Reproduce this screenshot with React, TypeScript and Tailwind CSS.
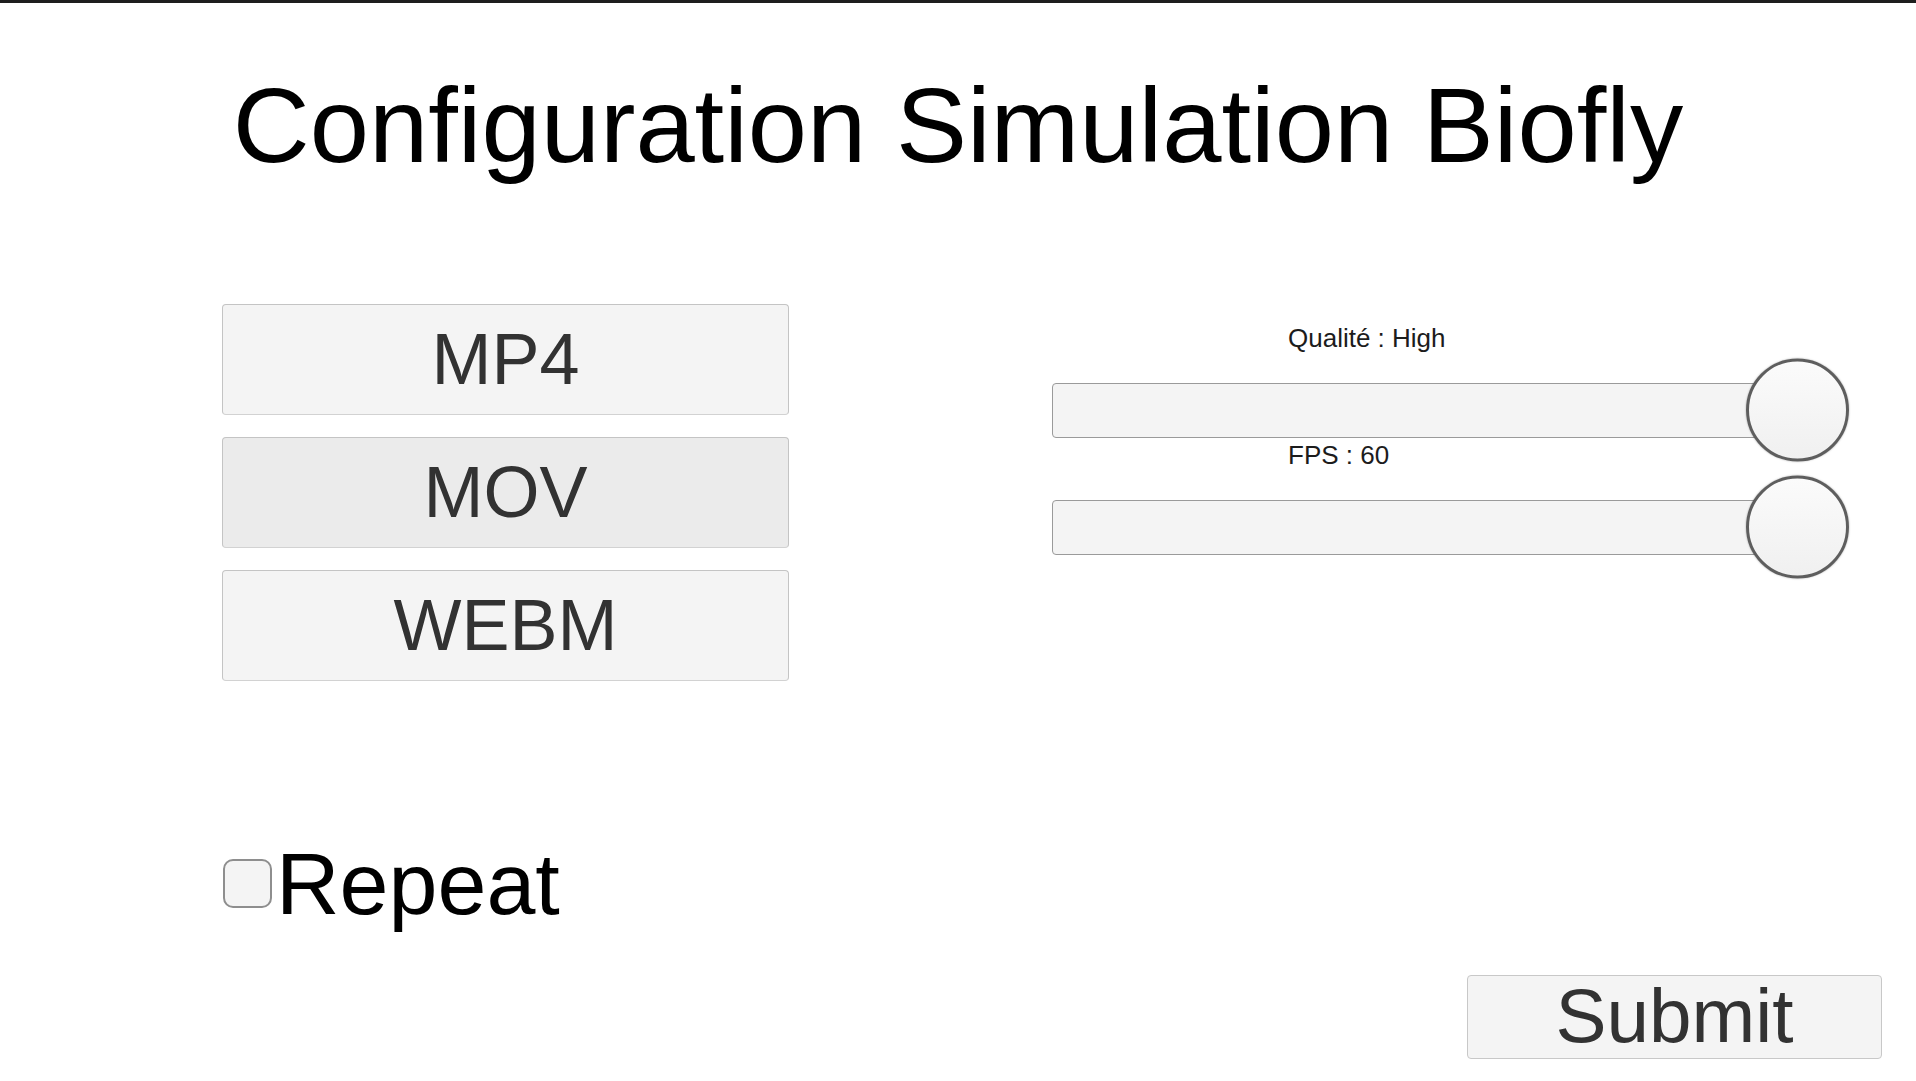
import React, { useState } from "react";

const formats = ["MP4", "MOV", "WEBM"];

function FormatButton({ label, active, onClick }: { label: string; active: boolean; onClick: () => void }) {
  return (
    <button
      onClick={onClick}
      className={
        active
          ? "h-[111px] w-full rounded-[4px] border border-[#c4c4c4] border-b-[#d2d2d2] bg-[#ebebeb] text-[72px] leading-none text-[#323232]"
          : "h-[111px] w-full rounded-[4px] border border-[#c4c4c4] border-b-[#d2d2d2] bg-[#f4f4f4] text-[72px] leading-none text-[#323232]"
      }
    >
      {label}
    </button>
  );
}

function Slider({ label }: { label: string }) {
  return (
    <div className="flex flex-col">
      <div className="pl-[236px] text-[26px] leading-none text-[#1c1c1c]">{label}</div>
      <div className="relative mt-[32px] h-[55px] w-[746px] rounded-[4px] border border-[#9a9a9a] bg-[#f4f4f4]">
        {/* thumb */}
        <div className="absolute right-[-52px] top-1/2 h-[103px] w-[103px] -translate-y-1/2 rounded-full border-[3px] border-[#5e5e5e] bg-gradient-to-b from-[#fbfbfb] to-[#f0f0f0] shadow-[0_0_2px_rgba(0,0,0,0.35)]" />
      </div>
    </div>
  );
}

export default function App() {
  const [format, setFormat] = useState("MOV");
  const [repeat, setRepeat] = useState(false);

  return (
    <div
      className="flex h-[1081px] w-[1916px] flex-col overflow-hidden bg-white"
      style={{ fontFamily: '"Liberation Sans", Arial, sans-serif' }}
    >
      <div className="h-[3px] w-full bg-[#1e1e1e]" />

      <h1 className="mt-[70px] text-center text-[106.5px] leading-none text-black">
        Configuration Simulation Biofly
      </h1>

      <div className="mt-[124px] flex pl-[222px]">
        <div className="flex w-[567px] flex-col gap-[22px]">
          {formats.map((f) => (
            <FormatButton key={f} label={f} active={format === f} onClick={() => setFormat(f)} />
          ))}
        </div>

        <div className="ml-[263px] flex flex-col gap-[4px] pt-[21px]">
          <Slider label="Qualité : High" />
          <Slider label="FPS : 60" />
        </div>
      </div>

      <div className="mt-[159px] flex items-center gap-[4px] pl-[223px]">
        <button
          onClick={() => setRepeat(!repeat)}
          className="h-[49px] w-[49px] rounded-[10px] border-2 border-[#8e8e8e] bg-[#f4f4f4]"
        />
        <span className="text-[88px] leading-none text-black">Repeat</span>
      </div>

      <div className="mt-[47px] flex justify-end pr-[34px]">
        <button className="h-[84px] w-[415px] rounded-[4px] border border-[#c8c8c8] bg-[#f4f4f4] text-[76.5px] leading-none text-[#323232]">
          Submit
        </button>
      </div>
    </div>
  );
}
